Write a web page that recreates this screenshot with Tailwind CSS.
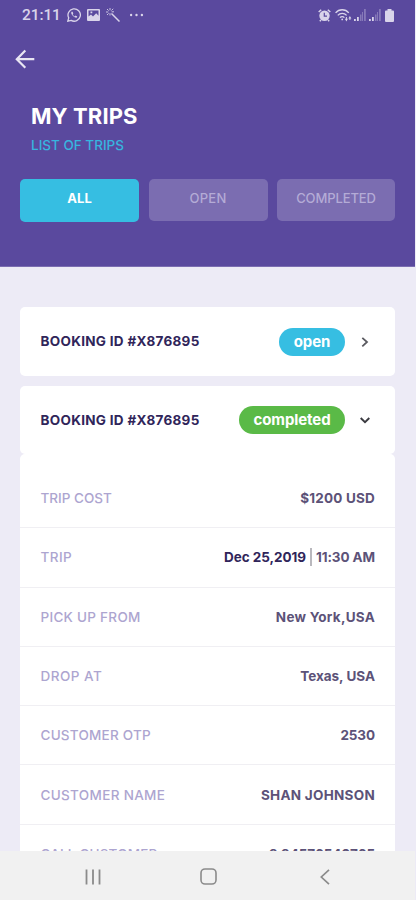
<!DOCTYPE html>
<html lang="en">
<head>
<meta charset="utf-8">
<title>My Trips</title>
<script src="https://cdn.jsdelivr.net/npm/@tailwindcss/browser@4"></script>
</head>
<body class="w-[416px] h-[900px] overflow-hidden bg-[#edebf6] font-['Inter',sans-serif] whitespace-nowrap">
<div class="flex flex-col w-[415px] h-[900px]">
  <header class="h-[267px] shrink-0 bg-[#5a499e] border-b border-[#7b6db1]">
    <!-- status bar -->
    <div class="flex items-center justify-between h-[30px] pl-[22px] pr-[21px] text-[#d9d4ea]">
      <div class="flex items-center">
        <span class="w-[38px] mr-[7px] font-['Roboto',sans-serif] text-[15.500px] font-medium leading-[30px] tracking-[-0.1px]">21:11</span>
        <svg class="w-[14px] h-[14px] mr-[6px]" viewBox="0 0 14 14" fill="none" stroke="currentColor" stroke-width="1.300"><path d="M.8 13.2l.9-3.3A6.2 6.2 0 1 1 4.100 12.400z"/><path d="M4.600 3.700c-1 1 0 3 1.500 4.400s3.200 2.200 4 1.200l.1-.9-1.600-.8-.8.8C6.700 8 5.900 7.100 5.600 6.300l.7-.8-.7-1.700z" fill="currentColor" stroke="none"/></svg>
        <svg class="w-[13px] h-[12px] mr-[6px]" viewBox="0 0 13 12"><path fill="currentColor" fill-rule="evenodd" d="M1 0h11a1 1 0 0 1 1 1v10a1 1 0 0 1-1 1H1a1 1 0 0 1-1-1V1a1 1 0 0 1 1-1zm.5 1.500v6L4 5.500l2 2 3.200-3.200 2.300 2.400V1.500zM3.500 2.600h1.800v1.600H3.500z"/></svg>
        <svg class="w-[14px] h-[14px] mr-[10px]" viewBox="0 0 14 14" fill="none" stroke="currentColor"><path d="M5.500 5.500l8 8" stroke-width="1.500"/><path d="M4 0v2.300M4 5.200v2.300M0 4h2.300M1 1l1.600 1.600M7.200 .8L5.500 2.500M1 7l1.600-1.600M5.600 3.800H8" stroke-width=".9"/></svg>
        <svg class="w-[14px] h-[4px]" viewBox="0 0 14 4" fill="currentColor"><circle cx="1.100" cy="2" r="1.200"/><circle cx="6.500" cy="2" r="1.200"/><circle cx="11.900" cy="2" r="1.200"/></svg>
      </div>
      <div class="flex items-center">
        <svg class="w-[13px] h-[13px] mr-[4px]" viewBox="0 0 13 13"><path d="M.7 3L3.200.8M9.800.8L12.300 3M3 11l-1.200 1.300M10 11l1.200 1.300" stroke="currentColor" stroke-width="1.500"/><circle cx="6.500" cy="6.800" r="5.200" fill="currentColor"/><path d="M6.300 3.800v3.300h2.700" fill="none" stroke="#5a499e" stroke-width="1.200"/></svg>
        <svg class="w-[17px] h-[13px] mr-[2px]" viewBox="0 0 17 13" fill="none" stroke="currentColor" stroke-width="1.300"><path d="M.6 3.900C4-.3 10.400-.3 13.800 3.900M2.800 6.300c2.300-2.700 6.500-2.700 8.800 0M5 8.700c1.200-1.400 3.200-1.400 4.400 0"/><circle cx="7.200" cy="10.400" r=".9" fill="currentColor" stroke="none"/><path d="M11.400 8v3M14.900 11V9" stroke-width="1"/><path d="M9.900 9.800h3l-1.500 2.600zM13.400 9.600h3l-1.500-2.500z" fill="currentColor" stroke="none"/></svg>
        <svg class="w-[12px] h-[12px] mr-[3px]" viewBox="0 0 12 12" fill="currentColor"><path d="M0 10h1.800v2H0zM3 8h1.800v4H3z"/><path opacity=".35" d="M6 5.500h1.500V12H6zM8 3h1v9H8zM10 0h1.800v12H10z"/></svg>
        <svg class="w-[12px] h-[12px] mr-[4px]" viewBox="0 0 12 12" fill="currentColor"><path d="M0 10h1.800v2H0zM3 8h1.800v4H3z"/><path opacity=".35" d="M6 5.500h1.500V12H6zM8 3h1v9H8zM10 0h1.800v12H10z"/></svg>
        <svg class="w-[9px] h-[13px]" viewBox="0 0 9 13" fill="currentColor"><path d="M2.500 0h4v1.500H8a1 1 0 0 1 1 1V12a1 1 0 0 1-1 1H1a1 1 0 0 1-1-1V2.500a1 1 0 0 1 1-1h1.500z"/></svg>
      </div>
    </div>
    <div class="h-[72px] pl-[15px] pt-[19px]">
      <svg class="w-[20px] h-[20px]" viewBox="0 0 20 20" fill="none" stroke="#e9e6f3" stroke-width="2.200"><path d="M19.300 10.200H2M10.300 1.500L1.800 10.200l8.500 8.600"/></svg>
    </div>
    <h1 class="pl-[31px] text-[22px] font-bold leading-[28px] tracking-[0.1px] text-white">MY TRIPS</h1>
    <p class="pl-[31px] mt-[5px] text-[13.5px] leading-[20px] font-medium text-[#37b5df]">LIST OF TRIPS</p>
    <nav class="flex justify-between pl-[20px] pr-[20px] mt-[24px] text-[13px] text-center">
      <div class="w-[119px] h-[43px] rounded-[5px] bg-[#36bee2] leading-[39px] font-bold tracking-[0.1px] text-white">ALL</div>
      <div class="w-[119px] h-[42px] rounded-[5px] bg-[#7b6db1] leading-[39px] font-medium tracking-[0.25px] text-[#b4abd6]">OPEN</div>
      <div class="w-[118px] h-[42px] rounded-[5px] bg-[#7b6db1] leading-[39px] font-medium tracking-[-0.1px] text-[#b4abd6]">COMPLETED</div>
    </nav>
  </header>

  <main class="flex-1 min-h-0 overflow-hidden pt-[40px] pl-[20px] pr-[20px]">
    <section class="flex items-center h-[69px] mb-[10px] pl-[20.500px] pr-[26px] rounded-[5px] bg-white">
      <span class="flex-1 text-[13.5px] font-bold tracking-[0.3px] text-[#30255a]">BOOKING ID #X876895</span>
      <span class="w-[66px] h-[28px] rounded-full bg-[#36bee2] text-center text-[15px] leading-[27px] font-bold tracking-[-0.11px] text-white">open</span>
      <svg class="w-[8px] h-[10px] ml-[16px]" viewBox="0 0 8 10" fill="none" stroke="#5a5a60" stroke-width="1.800"><path d="M1.300.8L6 5 1.300 9.300"/></svg>
    </section>
    <section class="flex items-center h-[68px] pl-[20.500px] pr-[25px] rounded-[5px] bg-white">
      <span class="flex-1 text-[13.5px] font-bold tracking-[0.3px] text-[#30255a]">BOOKING ID #X876895</span>
      <span class="w-[106px] h-[28px] rounded-full bg-[#5aba47] text-center text-[15px] leading-[27px] font-bold tracking-[-0.1px] text-white">completed</span>
      <svg class="w-[10px] h-[7px] ml-[15px]" viewBox="0 0 10 7" fill="none" stroke="#3a3a40" stroke-width="1.900"><path d="M.7 1L5 5.200 9.300 1"/></svg>
    </section>
    <section class="h-[420px] pt-[15px] rounded-t-[5px] bg-white text-[13.5px] font-medium text-[#ada5d0]">
      <div class="flex items-center justify-between h-[59.300px] pl-[20.500px] pr-[20px] border-b border-[#f0eff3]"><span>TRIP COST</span><span class="font-bold tracking-[0.2px] text-[#5c5278]">$1200 USD</span></div>
      <div class="flex items-center justify-between h-[59.300px] pl-[20.500px] pr-[20px] border-b border-[#f0eff3]"><span class="tracking-[0.45px]">TRIP</span><span class="flex items-center font-bold"><span class="tracking-[-0.05px] text-[#30255a]">Dec 25,2019</span><span class="w-[2px] h-[18px] ml-[4px] mr-[4px] bg-[#b9b8bd]"></span><span class="tracking-[-0.1px] text-[#5c5278]">11:30 AM</span></span></div>
      <div class="flex items-center justify-between h-[59.300px] pl-[20.500px] pr-[20px] border-b border-[#f0eff3]"><span class="tracking-[0.28px]">PICK UP FROM</span><span class="font-bold tracking-[0.25px] text-[#5c5278]">New York,USA</span></div>
      <div class="flex items-center justify-between h-[59.300px] pl-[20.500px] pr-[20px] border-b border-[#f0eff3]"><span class="tracking-[0.5px]">DROP AT</span><span class="font-bold text-[#5c5278]">Texas, USA</span></div>
      <div class="flex items-center justify-between h-[59.300px] pl-[20.500px] pr-[20px] border-b border-[#f0eff3]"><span class="tracking-[0.23px]">CUSTOMER OTP</span><span class="font-bold tracking-[-0.1px] text-[#5c5278]">2530</span></div>
      <div class="flex items-center justify-between h-[59.300px] pl-[20.500px] pr-[20px] border-b border-[#f0eff3]"><span class="tracking-[0.33px]">CUSTOMER NAME</span><span class="font-bold tracking-[0.28px] text-[#5c5278]">SHAN JOHNSON</span></div>
      <div class="flex items-center justify-between h-[59.300px] pl-[20.500px] pr-[20px]"><span class="tracking-[0.18px]">CALL CUSTOMER</span><span class="font-bold tracking-[-0.05px] text-[#5c5278]">9 94576540765</span></div>
    </section>
  </main>

  <footer class="flex items-center h-[49px] shrink-0 bg-[#f1f1f1] pl-[85px]">
    <svg class="w-[16px] h-[16px] mt-[2px]" viewBox="0 0 16 16" stroke="#8b8b8b" stroke-width="1.800"><path d="M1.500.5v15M8 .5v15M14.500.5v15"/></svg>
    <svg class="w-[17px] h-[17px] ml-[99px] mt-[2px]" viewBox="0 0 17 17" fill="none" stroke="#8b8b8b" stroke-width="1.600"><rect x="1" y="1" width="15" height="15" rx="4"/></svg>
    <svg class="w-[10px] h-[16px] ml-[103px] mt-[2px]" viewBox="0 0 10 16" fill="none" stroke="#8b8b8b" stroke-width="1.700"><path d="M9 .8L1.300 8 9 15.200"/></svg>
  </footer>
</div>
</body>
</html>
